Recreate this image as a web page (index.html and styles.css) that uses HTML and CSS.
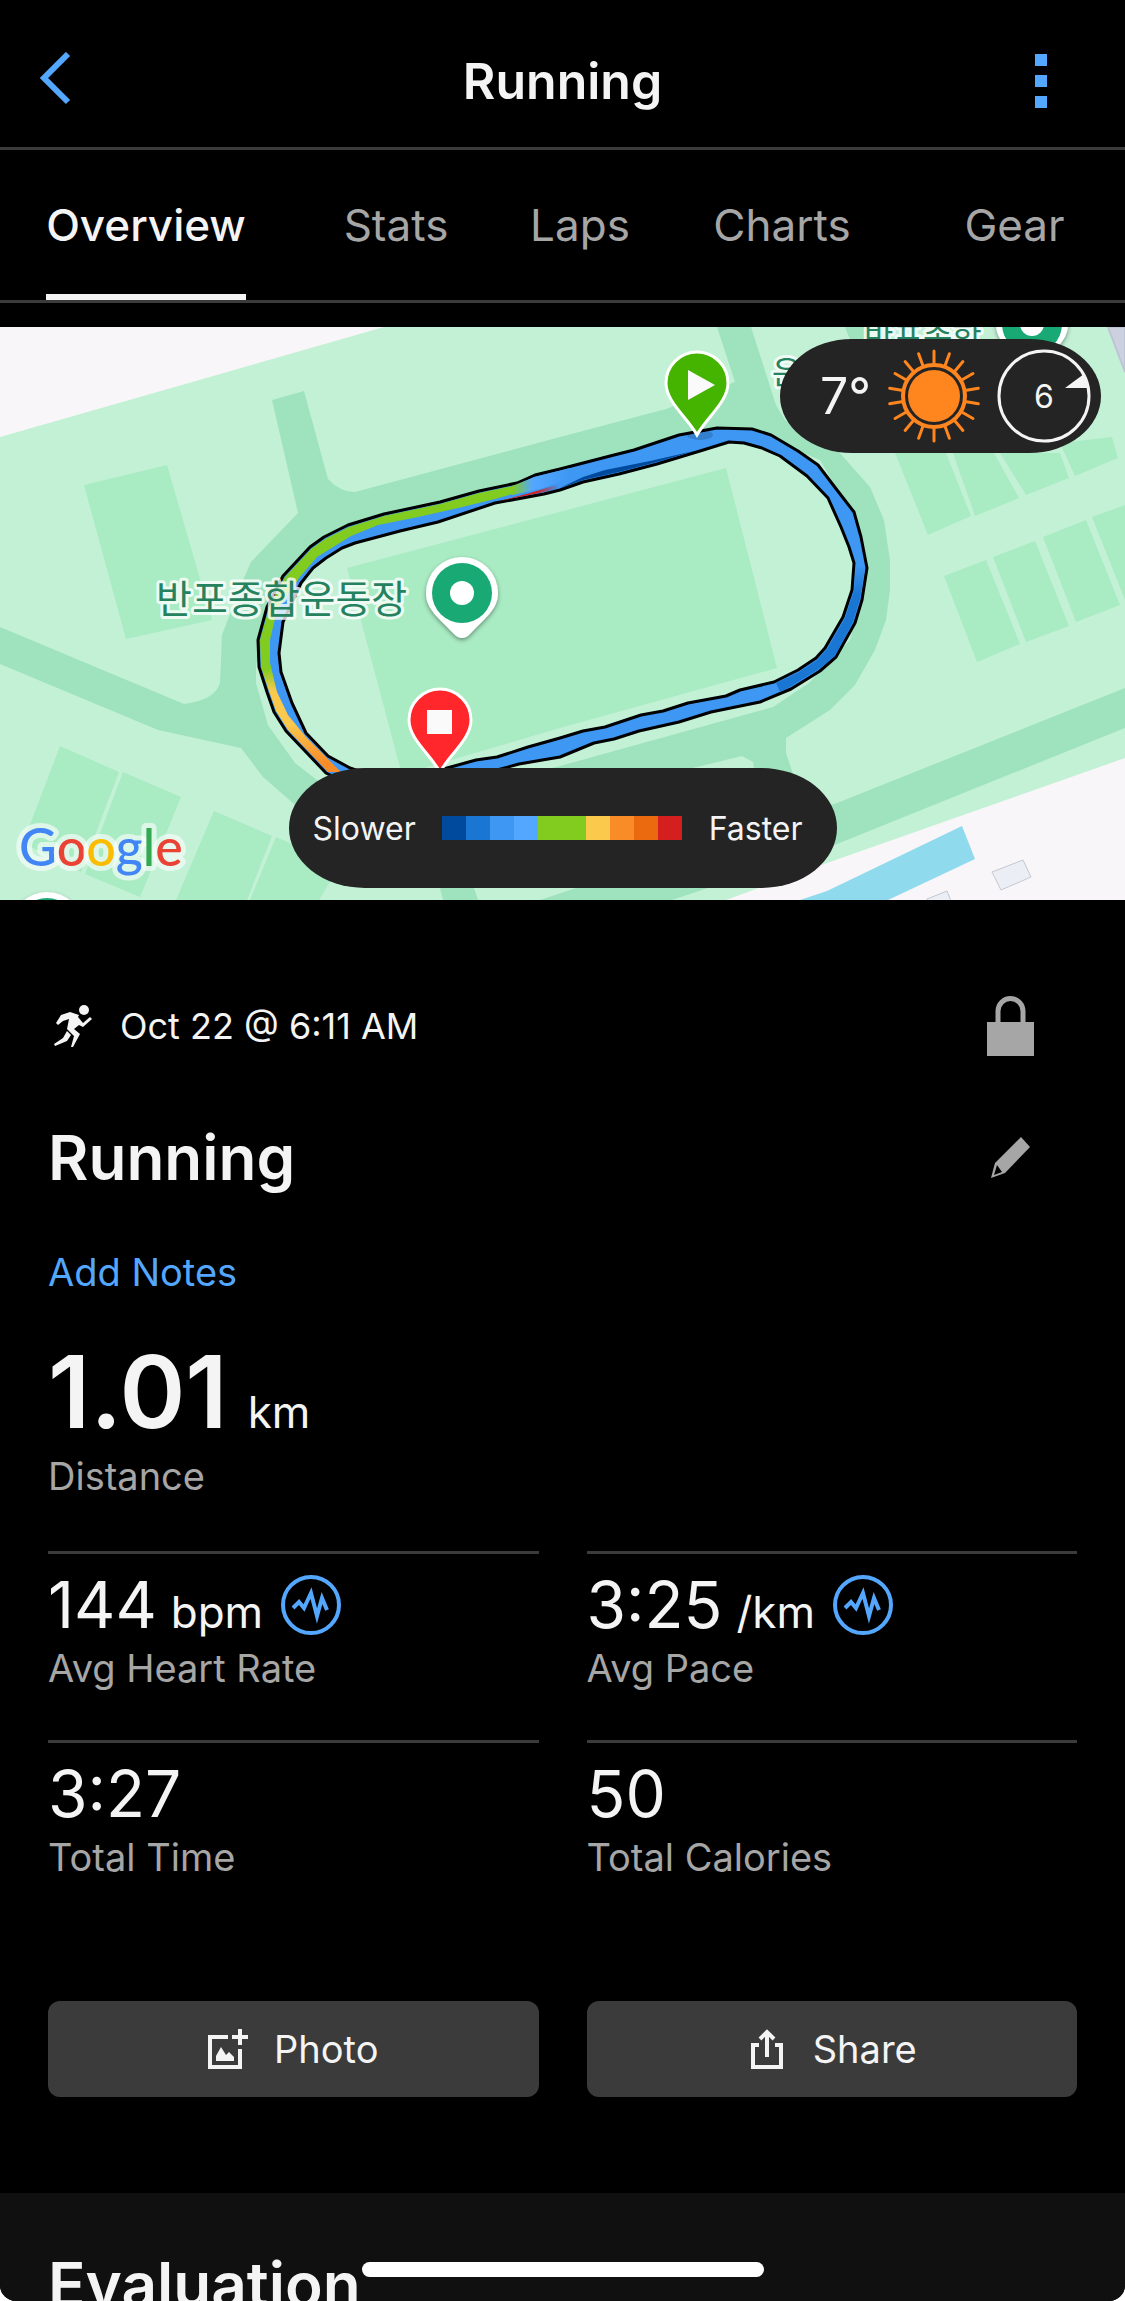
FILE: index.html
```html
<!DOCTYPE html>
<html lang="en">
<head>
    <meta charset="UTF-8">
    <meta name="viewport" content="width=device-width, initial-scale=1.0">
    <title>Running</title>
    <link rel="stylesheet" href="styles.css">
</head>
<body>
    <div class="screen">
        <header class="top-bar">
            <button class="icon-button" type="button" aria-label="Back">
                <svg width="32" height="58" viewBox="0 0 32 58"><path d="M28 2 L4 26 L28 50" fill="none" stroke="#54a7ff" stroke-width="6"/></svg>
            </button>
            <h1 class="page-title">Running</h1>
            <button class="icon-button menu-button" type="button" aria-label="More">
                <svg width="12" height="54" viewBox="0 0 12 54" fill="#54a7ff"><path d="M0 0h12v12H0zM0 21h12v12H0zM0 42h12v12H0z"/></svg>
            </button>
        </header>
        <nav class="tabs">
            <a class="tab active" href="#overview">Overview</a>
            <a class="tab" href="#stats">Stats</a>
            <a class="tab" href="#laps">Laps</a>
            <a class="tab" href="#charts">Charts</a>
            <a class="tab" href="#gear">Gear</a>
        </nav>

        <section class="map">
            <svg class="map-canvas" viewBox="0 327 1125 573" preserveAspectRatio="xMidYMid slice">
                <defs>
                    <linearGradient id="pace-left" gradientUnits="userSpaceOnUse" x1="0" y1="660" x2="0" y2="775">
                        <stop offset="0" stop-color="#82cb1f"/>
                        <stop offset="0.08" stop-color="#82cb1f"/>
                        <stop offset="0.27" stop-color="#fbca4c"/>
                        <stop offset="0.55" stop-color="#fbca4c"/>
                        <stop offset="0.9" stop-color="#fa8c28"/>
                    </linearGradient>
                    <linearGradient id="pace-top" gradientUnits="userSpaceOnUse" x1="512" y1="0" x2="570" y2="0">
                        <stop offset="0" stop-color="#82cb1f"/>
                        <stop offset="0.35" stop-color="#54a7ff"/>
                        <stop offset="1" stop-color="#3d97f3"/>
                    </linearGradient>
                    <linearGradient id="pace-right" gradientUnits="userSpaceOnUse" x1="0" y1="565" x2="0" y2="595">
                        <stop offset="0" stop-color="#3d97f3"/>
                        <stop offset="1" stop-color="#1976d2"/>
                    </linearGradient>
                    <linearGradient id="pace-red" gradientUnits="userSpaceOnUse" x1="500" y1="0" x2="560" y2="0">
                        <stop offset="0" stop-color="#d51f1f"/>
                        <stop offset="0.6" stop-color="#d51f1f"/>
                        <stop offset="1" stop-color="#3d97f3"/>
                    </linearGradient>
                    <filter id="shadow" x="-30%" y="-30%" width="160%" height="160%">
                        <feDropShadow dx="0" dy="2" stdDeviation="2" flood-opacity="0.4"/>
                    </filter>
                    <g id="place">
                        <path d="M-36 0A36 36 0 1 1 36 0C36 16 24 24 8 41Q0 49 -8 41C-24 24 -36 16 -36 0Z" fill="#fff" filter="url(#shadow)"/>
                        <circle r="30" fill="#19a974"/>
                        <circle r="12" fill="#fff"/>
                    </g>
                    <path id="pin" d="M0 48C-10 30 -31 15 -31 -4A31 31 0 1 1 31 -4C31 15 10 30 0 48Z" stroke="#fff" stroke-width="3"/>
                </defs>

                <!-- park -->
                <rect x="0" y="327" width="1125" height="573" fill="#c3f1d5"/>
                <path d="M0 327H384L0 437Z" fill="#f8f6f8"/>
                <path d="M1125 758L827 863L726 900H1125Z" fill="#f8f6f8"/>
                <path d="M1108 327H1125V372Z" fill="#cdd1df" stroke="#bfc4d4" stroke-width="2"/>

                <!-- fields -->
                <g fill="#a9ebc3">
                    <path d="M84 485L167 465L212 620L126 639Z"/>
                    <path d="M60 746L119 772L81 872L23 843ZM123 772L181 797L140 897L85 874Z"/>
                    <path d="M214 811L272 836L247 900H176ZM276 837L340 865L319 900H250Z"/>
                    <path d="M895 453L946 453L971 516L928 535ZM953 453H994L1019 498L975 516ZM1000 453H1060L1069 478L1026 495ZM1060 443L1112 437L1118 458L1075 476Z"/>
                    <path d="M944 576L986 560L1020 644L977 662ZM993 557L1035 541L1069 626L1026 642ZM1043 537L1086 520L1120 605L1076 622ZM1092 517L1125 505V600Z"/>
                </g>

                <!-- paths -->
                <g fill="#9fe3be">
                    <path d="M272 400L304 391L328 479Q340 492 355 492L560 437L666 409L735 382L717 327H751L776 405L785 420L839 452L870 487L884 520L890 560V590L886 620L875 650L855 685L830 710L786 738V753L795 780H294L263 777L241 748L158 730L0 664V627L184 704Q215 700 220 683L222 635L243 580L251 562L298 513Z"/>
                    <path d="M1125 688L837 803L582 886L540 900H672L708 888L837 844L1125 728Z"/>
                    <path d="M845 327H882L890 345H852ZM440 888H474L478 900H443ZM294 804L263 777L340 776V830Z"/>
                </g>
                <path d="M256 665V683L268 725L295 763L330 790L460 790L560 766L773 707L809 683L850 640L862 590L855 520L820 460L770 440L700 440L560 478L340 545L290 590L262 640Z" fill="#c3f1d5"/>
                <path d="M697 767L742 756L753 762L756 780H640Z" fill="#c3f1d5"/>
                <path d="M347 568L726 468L777 668L560 728L461 757L402 775Z" fill="#a9ebc3"/>

                <!-- water and buildings -->
                <path d="M962 826L975 859L888 900H800L827 891Z" fill="#90daee"/>
                <path d="M992 872L1023 860L1031 877L1001 890ZM927 899L947 891L951 901H927Z" fill="#eceef5" stroke="#c4c7d0" stroke-width="1"/>

                <!-- route -->
                <path fill="#3d97f3" fill-rule="evenodd" stroke="#000" stroke-width="3" stroke-linejoin="round" d="M517 483L479 491L440 502L384 514L348 525L324 537L310 547L283 576L267 607L258 640L259 667L267 692L274 712L286 731L326 773L380 800L440 790L497 770L519 764L560 757L594 743L614 739L639 731L679 722L711 712L760 702L791 689L820 671L836 657L855 623L862 600L867 568L861 537L854 512L837 490L818 465L798 451L771 435L752 429L717 428L679 435L634 450L614 455L560 469L535 475ZM560 490L583 482L619 474L657 464L700 451L729 442L744 443L762 448L780 456L807 476L828 498L841 527L849 547L854 563L852 590L843 617L825 648L816 658L798 670L774 682L740 690L726 696L688 703L663 711L641 715L605 727L583 731L560 738L528 747L497 757L476 760L447 768L400 785L350 768L328 756L306 733L292 703L281 672L279 653L283 622L301 583L313 568L326 558L342 548L355 543L400 531L438 522L495 503L544 494Z"/>
                <path fill="url(#pace-left)" d="M517 485L479 493L440 504L384 516L349 527L325 539L311 549L285 577L269 608L260 640L261 667L269 691L276 711L288 730L328 772L341 772L306 737L288 715L277 692L270 663V640L277 610L299 578L317 557L351 536L378 525L418 517L458 508L495 499L519 492Z"/>
                <path fill="url(#pace-top)" d="M512 486L535 477L570 468V478L540 489L512 495Z"/>
                <path fill="url(#pace-red)" d="M500 501L530 493L556 485L558 488L544 492Z"/>
                <path fill="#004a9e" d="M560 488L583 477L605 470L650 461L694 451L657 462L619 472L583 480Z"/>
                <path fill="url(#pace-right)" d="M856 565L865 568L860 599L853 622L835 656L819 669L790 687L780 692L776 683L799 672L817 660L827 649L845 618L854 590Z"/>

                <!-- labels and markers -->
                <g class="place-label">
                    <text x="156" y="613" font-size="39">반포종합운동장</text>
                    <text x="864" y="349" font-size="32">반포종합</text>
                    <text x="772" y="384" font-size="32">운</text>
                </g>
                <use href="#place" x="462" y="593"/>
                <use href="#place" x="1032" y="324"/>
                <use href="#place" x="47" y="928"/>
                <ellipse cx="700" cy="435" rx="13" ry="5" fill="#000" opacity="0.15"/>
                <use href="#pin" x="697" y="387" fill="#44b400"/>
                <path d="M688 370L715 385L688 400Z" fill="#fafafa"/>
                <use href="#pin" x="440" y="724" fill="#ff272c"/>
                <path d="M427 710h25v24h-25z" fill="#fafafa"/>
                <text class="map-credit" x="19" y="866"><tspan fill="#4285f4">G</tspan><tspan fill="#ea4335">o</tspan><tspan fill="#fbbc04">o</tspan><tspan fill="#4285f4">g</tspan><tspan fill="#34a853">l</tspan><tspan fill="#ea4335">e</tspan></text>
            </svg>

            <div class="weather">
                <span class="temperature">7°</span>
                <svg width="94" height="94" viewBox="-47 -47 94 94" stroke="#ff851f" fill="none">
                    <circle r="26" fill="#ff851f" stroke="none"/>
                    <circle r="31" stroke-width="4"/>
                    <g stroke-width="3" stroke-linecap="round">
                        <path id="ray" d="M0 -33V-45M0 33V45"/>
                        <use href="#ray" transform="rotate(20)"/>
                        <use href="#ray" transform="rotate(40)"/>
                        <use href="#ray" transform="rotate(60)"/>
                        <use href="#ray" transform="rotate(80)"/>
                        <use href="#ray" transform="rotate(100)"/>
                        <use href="#ray" transform="rotate(120)"/>
                        <use href="#ray" transform="rotate(140)"/>
                        <use href="#ray" transform="rotate(160)"/>
                    </g>
                </svg>
                <div class="wind">
                    <svg width="94" height="94" viewBox="-47 -47 94 94">
                        <circle r="45" fill="none" stroke="#f4f4f4" stroke-width="3"/>
                        <path d="M21 -8L40 -22L45 -8Z" fill="#f4f4f4"/>
                    </svg>
                    <span>6</span>
                </div>
            </div>

            <div class="legend">
                <span>Slower</span>
                <div class="legend-bar">
                    <i class="pace-1"></i><i class="pace-2"></i><i class="pace-3"></i><i class="pace-4"></i><i class="pace-5"></i><i class="pace-5"></i><i class="pace-6"></i><i class="pace-7"></i><i class="pace-8"></i><i class="pace-9"></i>
                </div>
                <span>Faster</span>
            </div>
        </section>

        <main class="details" id="overview">
            <div class="row date-row">
                <svg width="40" height="42" viewBox="0 0 40 42" fill="#f4f4f4">
                    <circle cx="30" cy="5" r="5"/>
                    <path d="M16 7L25 10L24 12L29 18L36 12L38 14L29 22L25 20L20 24L26 29L19 42H17L20 31L13 24L15 14L9 16L4 20L2 18L7 10ZM13 26L17 30L13 36L1 41L0 39L9 33Z"/>
                </svg>
                <p class="date">Oct 22 @ 6:11 AM</p>
                <svg class="row-end" width="48" height="60" viewBox="0 0 48 60">
                    <path d="M11 28V15A12.5 12.5 0 0 1 36 15V28" fill="none" stroke="#a6a6a6" stroke-width="5"/>
                    <path d="M0 26h47v34H0z" fill="#a6a6a6"/>
                </svg>
            </div>
            <div class="row title-row">
                <h2 class="activity-name">Running</h2>
                <button class="icon-button row-end" type="button" aria-label="Edit name">
                    <svg width="48" height="42" viewBox="0 0 48 42"><path d="M34 0L43 10L18 36L4 41L8 26ZM10 28L7 38L15 35Z" fill="#a6a6a6" fill-rule="evenodd"/></svg>
                </button>
            </div>
            <a class="notes" href="#notes">Add Notes</a>
            <div class="distance">
                <p class="value big"><strong>1.01</strong> <span class="unit">km</span></p>
                <p class="label">Distance</p>
            </div>
            <div class="grid">
                <div class="stat">
                    <p class="value">144 <span class="unit">bpm</span>
                        <svg class="pulse" width="60" height="60" viewBox="0 0 60 60" fill="none" stroke="#54a7ff"><circle cx="30" cy="30" r="28" stroke-width="4"/><path d="M12 33L18 27L23 33L30 18L36 41L41 23L46 35" stroke-width="4"/></svg>
                    </p>
                    <p class="label">Avg Heart Rate</p>
                </div>
                <div class="stat">
                    <p class="value">3:25 <span class="unit">/km</span>
                        <svg class="pulse" width="60" height="60" viewBox="0 0 60 60" fill="none" stroke="#54a7ff"><circle cx="30" cy="30" r="28" stroke-width="4"/><path d="M12 33L18 27L23 33L30 18L36 41L41 23L46 35" stroke-width="4"/></svg>
                    </p>
                    <p class="label">Avg Pace</p>
                </div>
                <div class="stat">
                    <p class="value">3:27</p>
                    <p class="label">Total Time</p>
                </div>
                <div class="stat">
                    <p class="value">50</p>
                    <p class="label">Total Calories</p>
                </div>
            </div>
            <div class="grid actions">
                <button class="action-button" type="button">
                    <svg width="40" height="40" viewBox="0 0 40 40" fill="none" stroke="#f4f4f4" stroke-width="4"><path d="M20 8H2V38H32V20"/><path d="M32 0V16M24 8H40"/><path d="M8 32V27L13 18L18 26L21 23L26 28V32Z" fill="#f4f4f4" stroke="none"/></svg>
                    Photo
                </button>
                <button class="action-button" type="button">
                    <svg width="40" height="40" viewBox="0 0 40 40" fill="none" stroke="#f4f4f4" stroke-width="4"><path d="M12 16H6V38H34V16H28"/><path d="M20 28V4M13 10L20 3L27 10"/></svg>
                    Share
                </button>
            </div>
        </main>

        <section class="evaluation">
            <h2 class="activity-name">Evaluation</h2>
        </section>
        <div class="home-indicator"></div>
    </div>
</body>
</html>
```
FILE: styles.css
```css
* {
    margin: 0;
    padding: 0;
    box-sizing: border-box;
}
body {
    background-color: #fff;
    font-family: Inter, "Noto Sans CJK KR", sans-serif;
    color: #f4f4f4;
}
svg {
    display: block;
    flex-shrink: 0;
}
.screen {
    position: relative;
    display: flex;
    flex-direction: column;
    height: 100vh;
    overflow: hidden;
    background-color: #000;
    border-radius: 0 0 16px 16px;
}
.icon-button {
    background: none;
    border: none;
}

/* header */
.top-bar {
    display: grid;
    flex-shrink: 0;
    grid-template-columns: 1fr auto 1fr;
    align-items: center;
    height: 150px;
    padding: 14px 78px 0 40px;
    border-bottom: 3px solid #3b3b3b;
}
.top-bar .icon-button {
    justify-self: start;
}
.top-bar .menu-button {
    justify-self: end;
}
.page-title {
    padding-left: 38px;
    font-size: 50px;
    line-height: 60px;
    font-weight: 600;
}
.tabs {
    display: grid;
    flex-shrink: 0;
    grid-template-columns: 292fr 208fr 160fr 244fr 221fr;
    justify-items: center;
    height: 153px;
    border-bottom: 3px solid #3b3b3b;
}
.tab {
    padding-top: 47px;
    font-size: 44px;
    line-height: 56px;
    color: #a6a6a6;
    text-decoration: none;
}
.tab.active {
    color: #f4f4f4;
    font-weight: 500;
    border-bottom: 6px solid #f4f4f4;
}

/* map */
.map {
    position: relative;
    flex-shrink: 0;
    height: 573px;
    margin-top: 24px;
}
.map-canvas {
    width: 100%;
    height: 100%;
}
.place-label {
    font-family: "Noto Sans CJK KR", sans-serif;
    fill: #25825f;
    stroke: #fff;
    stroke-width: 6px;
    stroke-opacity: 0.8;
    stroke-linejoin: round;
    paint-order: stroke;
}
.map-credit {
    font-family: Lato, sans-serif;
    font-size: 52px;
    font-weight: 500;
    stroke: #fff;
    stroke-width: 10px;
    stroke-opacity: 0.6;
    stroke-linejoin: round;
    paint-order: stroke;
}
.weather {
    position: absolute;
    top: 12px;
    right: 24px;
    display: flex;
    align-items: center;
    justify-content: space-between;
    width: 321px;
    height: 114px;
    padding: 0 10px 0 40px;
    background-color: #242424;
    border-radius: 72px / 57px;
}
.temperature {
    font-size: 50px;
}
.wind {
    display: grid;
    place-items: center;
    font-size: 32px;
}
.wind > * {
    grid-area: 1 / 1;
}
.legend {
    position: absolute;
    left: 50%;
    bottom: 12px;
    display: flex;
    align-items: center;
    justify-content: space-between;
    width: 548px;
    height: 120px;
    margin-left: -274px;
    padding: 0 34px 0 24px;
    background-color: #242424;
    border-radius: 76px / 60px;
    font-size: 32px;
}
.legend-bar {
    display: flex;
}
.legend-bar i {
    width: 24px;
    height: 24px;
}
.pace-1 { background-color: #004a9e; }
.pace-2 { background-color: #1976d2; }
.pace-3 { background-color: #3d97f3; }
.pace-4 { background-color: #54a7ff; }
.pace-5 { background-color: #82cb1f; }
.pace-6 { background-color: #fbca4c; }
.pace-7 { background-color: #fa8c28; }
.pace-8 { background-color: #eb690f; }
.pace-9 { background-color: #d51f1f; }

/* activity details */
.details {
    display: flex;
    flex-direction: column;
    flex-shrink: 0;
    padding: 96px 48px;
}
.row {
    display: flex;
    align-items: center;
    padding-right: 42px;
}
.row-end {
    margin-left: auto;
}
.date-row {
    height: 60px;
    gap: 26px;
    padding-left: 6px;
}
.date {
    font-size: 36px;
}
.title-row {
    height: 80px;
    margin-top: 62px;
}
.activity-name {
    font-size: 62px;
    line-height: 80px;
    font-weight: 600;
}
.notes {
    align-self: flex-start;
    margin-top: 50px;
    font-size: 38px;
    line-height: 48px;
    color: #54a7ff;
    text-decoration: none;
}
.distance {
    margin-top: 36px;
}
.value {
    display: flex;
    align-items: baseline;
    gap: 14px;
    font-size: 64px;
    line-height: 78px;
}
.value.big {
    gap: 20px;
    font-size: 100px;
    line-height: 120px;
}
.value strong {
    font-weight: 600;
}
.value .unit {
    font-size: 44px;
    line-height: 44px;
}
.pulse {
    align-self: center;
    margin-left: 4px;
}
.label {
    font-size: 38px;
    line-height: 48px;
    color: #a6a6a6;
}
.grid {
    display: grid;
    grid-template-columns: 1fr 1fr;
    column-gap: 48px;
}
.distance + .grid {
    margin-top: 51px;
}
.stat {
    height: 189px;
    padding-top: 12px;
    border-top: 3px solid #3b3b3b;
}
.actions {
    margin-top: 72px;
}
.action-button {
    display: flex;
    align-items: center;
    justify-content: center;
    gap: 26px;
    height: 96px;
    background-color: #3b3b3b;
    border: none;
    border-radius: 12px;
    color: #f4f4f4;
    font-family: inherit;
    font-size: 38px;
}
.evaluation {
    flex-grow: 1;
    padding: 52px 48px;
    background-color: #101010;
}
.home-indicator {
    position: absolute;
    left: 50%;
    bottom: 24px;
    width: 402px;
    height: 15px;
    margin-left: -201px;
    background-color: #fff;
    border-radius: 8px;
}
```
